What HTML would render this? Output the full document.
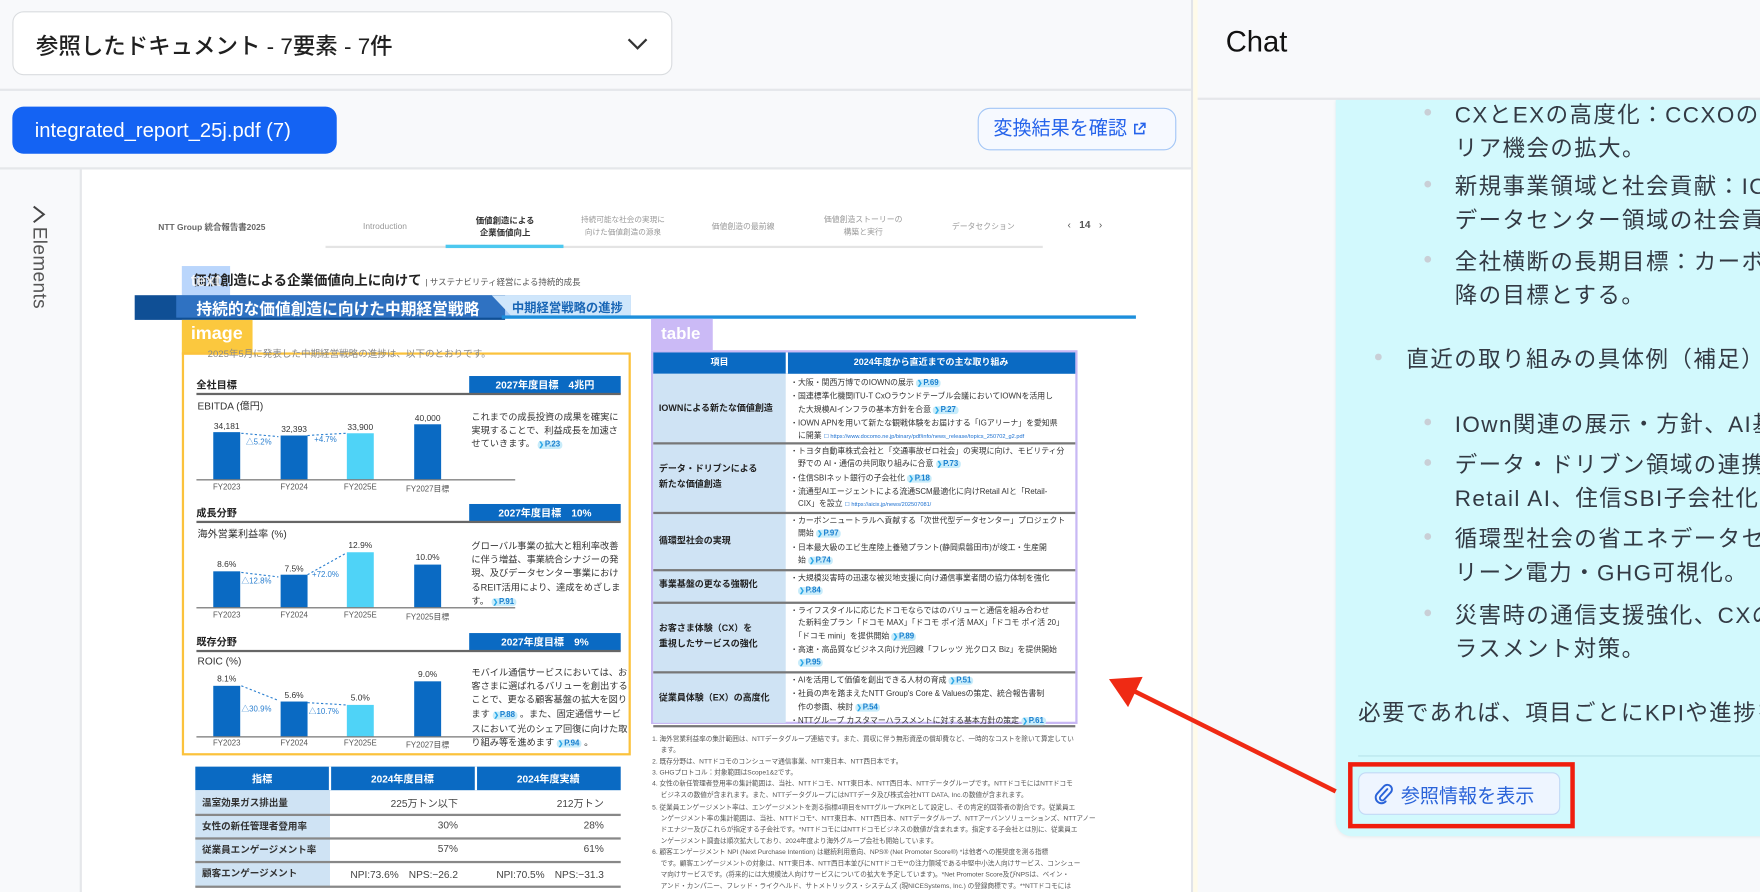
<!DOCTYPE html>
<html><head><meta charset="utf-8">
<style>
*{margin:0;padding:0;box-sizing:border-box}
html,body{width:1760px;height:892px;overflow:hidden;background:#f8f9fb}
body{font-family:"Liberation Sans","Noto Sans CJK JP",sans-serif;color:#222}
#w{position:absolute;left:0;top:0;width:1568px;height:795px;transform:scale(1.12245);transform-origin:0 0;overflow:hidden}
.a{position:absolute;white-space:nowrap}
.pg{color:#1a7fcf;background:#c8ecfa;border-radius:3px;font-weight:bold;padding:0 2px 0 1px}
.pg:before{content:"❯";font-size:0.8em;color:#2aa8e8;margin-right:1px}
.bar{position:absolute;background:#0a6ac3;width:24px}
.cy{background:#4fd3f7}
.fy{position:absolute;font-size:7px;color:#555;width:60px;text-align:center}
.val{position:absolute;font-size:7.5px;color:#333;width:60px;text-align:center}
.sec{position:absolute;font-size:9px;font-weight:bold;color:#222}
.goal{position:absolute;background:#0a6ac3;color:#fff;font-size:9px;font-weight:bold;text-align:center;height:16px;line-height:16px}
.hl{position:absolute;height:1.5px;background:#666}
.ptxt{position:absolute;font-size:8.2px;line-height:12.2px;color:#333;white-space:nowrap}
.tc{position:absolute;font-size:7px;line-height:11.3px;color:#333;white-space:nowrap}
.tl{position:absolute;font-size:8px;font-weight:bold;color:#222;line-height:14px}
.fn{position:absolute;font-size:5.9px;line-height:10.1px;color:#555;white-space:nowrap}
.cl{position:absolute;font-size:20px;letter-spacing:1.3px;color:#333a44;white-space:nowrap}
.dot{position:absolute;width:6px;height:6px;border-radius:50%;background:#c9cfd6}
</style></head><body><div id="w">

<div class="a" style="left:0;top:0;width:1062px;height:795px;background:#f8f9fb"></div>
<div class="a" style="left:1061px;top:0;width:2px;height:795px;background:#e2e4e8"></div>
<div class="a" style="left:1063px;top:0;width:4px;height:795px;background:#fffbe9"></div>

<div class="a" style="left:11px;top:10px;width:588px;height:57px;border:1.5px solid #d9dcdf;border-radius:10px;background:#fff"></div>
<div class="a" style="left:32px;top:25px;font-size:20px;font-weight:500;color:#1f1f1f">参照したドキュメント - 7要素 - 7件</div>
<svg class="a" style="left:558px;top:32px" width="20" height="14"><polyline points="2,3 10,11 18,3" fill="none" stroke="#333" stroke-width="2"/></svg>
<div class="a" style="left:0;top:79px;width:1061px;height:2px;background:#e5e7ea"></div>

<div class="a" style="left:11px;top:95px;width:289px;height:42px;border-radius:10px;background:#1463f3;color:#fff;font-size:18px;font-weight:500;line-height:42px;padding-left:20px">integrated_report_25j.pdf (7)</div>
<div class="a" style="left:871px;top:96px;width:177px;height:38px;border:1.5px solid #a3c6f6;border-radius:11px;background:#f6f9ff;color:#2563eb;font-size:17px;line-height:35px;padding-left:13px">変換結果を確認 <svg width="12" height="12" viewBox="0 0 12 12" style="vertical-align:-1px"><path d="M5 2H2v8h8V7M7 1h4v4M11 1 5.5 6.5" fill="none" stroke="#2563eb" stroke-width="1.4"/></svg></div>
<div class="a" style="left:0;top:149px;width:1061px;height:2px;background:#e5e7ea"></div>

<div class="a" style="left:71px;top:151px;width:1.5px;height:644px;background:#e5e7ea"></div>
<svg class="a" style="left:27px;top:182px" width="16" height="18"><polyline points="3,2 12,9 3,16" fill="none" stroke="#444" stroke-width="1.8"/></svg>
<div class="a" style="left:25px;top:202px;writing-mode:vertical-rl;font-size:17px;color:#555;letter-spacing:0.3px">Elements</div>

<div class="a" style="left:73px;top:151px;width:988px;height:644px;background:#fff"></div>

<div class="a" style="left:141px;top:197px;font-size:7.5px;font-weight:bold;color:#666">NTT Group 統合報告書2025</div>
<div class="a" style="left:313px;top:197px;width:60px;text-align:center;font-size:7.5px;color:#999">Introduction</div>
<div class="a" style="left:405px;top:191px;width:90px;text-align:center;font-size:7.5px;line-height:11px;font-weight:bold;color:#333">価値創造による<br>企業価値向上</div>
<div class="a" style="left:505px;top:191px;width:100px;text-align:center;font-size:6.8px;line-height:11px;color:#999">持続可能な社会の実現に<br>向けた価値創造の源泉</div>
<div class="a" style="left:612px;top:197px;width:100px;text-align:center;font-size:7px;color:#999">価値創造の最前線</div>
<div class="a" style="left:719px;top:191px;width:100px;text-align:center;font-size:7px;line-height:11px;color:#999">価値創造ストーリーの<br>構築と実行</div>
<div class="a" style="left:826px;top:197px;width:100px;text-align:center;font-size:7px;color:#999">データセクション</div>
<div class="a" style="left:951px;top:195px;font-size:9px;color:#555">‹ &nbsp; <b>14</b> &nbsp; ›</div>
<div class="a" style="left:290px;top:219px;width:639px;height:2px;background:#e4e4e4"></div>
<div class="a" style="left:397px;top:218px;width:105px;height:3px;background:#4cc8ef"></div>

<div class="a" style="left:162px;top:237px;width:43px;height:26px;background:rgba(130,180,250,.55)"></div>
<div class="a" style="left:172px;top:241px;font-size:12px;font-weight:bold;color:#222">価値創造による企業価値向上に向けて <span style="font-weight:normal;color:#555;font-size:7.5px">| サステナビリティ経営による持続的成長</span></div>
<div class="a" style="left:170px;top:242px;font-size:15px;font-weight:bold;color:rgba(255,255,255,.85)">text</div>

<div class="a" style="left:120px;top:263px;width:330px;height:22px;background:#0f4f95"></div>
<div class="a" style="left:157px;top:263px;width:405px;height:20px;background:rgba(80,150,240,.5)"></div>
<svg class="a" style="left:438px;top:263px" width="125" height="22"><polygon points="0,0 124,0 124,19 18,19" fill="#cfe6fb"/></svg>
<div class="a" style="left:447px;top:281px;width:565px;height:3px;background:#1d8fdc"></div>
<div class="a" style="left:175px;top:265px;font-size:14px;font-weight:bold;color:#fff">持続的な価値創造に向けた中期経営戦略</div>
<div class="a" style="left:456px;top:266px;font-size:11px;font-weight:bold;color:#1765b5">中期経営戦略の進捗</div>

<div class="a" style="left:162px;top:285px;width:63px;height:31px;background:#fbc83e"></div>
<div class="a" style="left:170px;top:289px;font-size:16px;font-weight:bold;color:#fff">image</div>
<div class="a" style="left:162px;top:314px;width:400px;height:359px;border:2px solid #fbc23c"></div>
<div class="a" style="left:185px;top:309px;font-size:8.5px;color:#888">2025年5月に発表した中期経営戦略の進捗は、以下のとおりです。</div>

<div class="sec" style="left:175px;top:336px">全社目標</div>
<div class="goal" style="left:418px;top:335px;width:135px">2027年度目標　4兆円</div>
<div class="hl" style="left:175px;top:350px;width:378px"></div>
<div class="a" style="left:176px;top:355px;font-size:9px;color:#333">EBITDA (億円)</div>
<div class="bar" style="left:190px;top:385px;height:42px"></div>
<div class="bar" style="left:250px;top:388px;height:39px"></div>
<div class="bar cy" style="left:309px;top:386px;height:41px"></div>
<div class="bar" style="left:369px;top:378px;height:49px"></div>
<div class="hl" style="left:175px;top:427px;width:284px;height:1px"></div>
<div class="val" style="left:172px;top:375px">34,181</div><div class="val" style="left:232px;top:378px">32,393</div><div class="val" style="left:291px;top:376px">33,900</div><div class="val" style="left:351px;top:368px">40,000</div>
<div class="fy" style="left:172px;top:431px">FY2023</div><div class="fy" style="left:232px;top:431px">FY2024</div><div class="fy" style="left:291px;top:431px">FY2025E</div><div class="fy" style="left:351px;top:431px">FY2027目標</div>
<svg class="a" style="left:214px;top:380px" width="100" height="20"><path d="M1 6 L34 9 M60 8 L94 6" stroke="#2a7fd0" stroke-dasharray="2 2" fill="none"/></svg>
<div class="a" style="left:219px;top:389px;font-size:7px;color:#2a7fd0">△5.2%</div>
<div class="a" style="left:280px;top:389px;font-size:7px;color:#2a7fd0">+4.7%</div>
<div class="ptxt" style="left:420px;top:366px">これまでの成長投資の成果を確実に<br>実現することで、利益成長を加速さ<br>せていきます。 <span class="pg" style="font-size:7px">P.23</span></div>

<div class="sec" style="left:175px;top:450px">成長分野</div>
<div class="goal" style="left:418px;top:449px;width:135px">2027年度目標　10%</div>
<div class="hl" style="left:175px;top:464px;width:378px"></div>
<div class="a" style="left:176px;top:469px;font-size:9px;color:#333">海外営業利益率 (%)</div>
<div class="bar" style="left:190px;top:509px;height:32px"></div>
<div class="bar" style="left:250px;top:512px;height:29px"></div>
<div class="bar cy" style="left:309px;top:492px;height:49px"></div>
<div class="bar" style="left:369px;top:503px;height:38px"></div>
<div class="hl" style="left:175px;top:541px;width:284px;height:1px"></div>
<div class="val" style="left:172px;top:498px">8.6%</div><div class="val" style="left:232px;top:502px">7.5%</div><div class="val" style="left:291px;top:481px">12.9%</div><div class="val" style="left:351px;top:492px">10.0%</div>
<div class="fy" style="left:172px;top:545px">FY2023</div><div class="fy" style="left:232px;top:545px">FY2024</div><div class="fy" style="left:291px;top:545px">FY2025E</div><div class="fy" style="left:351px;top:545px">FY2025目標</div>
<svg class="a" style="left:214px;top:490px" width="100" height="30"><path d="M1 20 L34 24 M60 22 L94 3" stroke="#2a7fd0" stroke-dasharray="2 2" fill="none"/></svg>
<div class="a" style="left:215px;top:513px;font-size:7px;color:#2a7fd0">△12.8%</div>
<div class="a" style="left:278px;top:509px;font-size:7px;color:#2a7fd0">+72.0%</div>
<div class="ptxt" style="left:420px;top:481px">グローバル事業の拡大と粗利率改善<br>に伴う増益、事業統合シナジーの発<br>現、及びデータセンター事業におけ<br>るREIT活用により、達成をめざしま<br>す。 <span class="pg" style="font-size:7px">P.91</span></div>

<div class="sec" style="left:175px;top:565px">既存分野</div>
<div class="goal" style="left:418px;top:564px;width:135px">2027年度目標　9%</div>
<div class="hl" style="left:175px;top:579px;width:378px"></div>
<div class="a" style="left:176px;top:584px;font-size:9px;color:#333">ROIC (%)</div>
<div class="bar" style="left:190px;top:611px;height:45px"></div>
<div class="bar" style="left:250px;top:625px;height:31px"></div>
<div class="bar cy" style="left:309px;top:628px;height:28px"></div>
<div class="bar" style="left:369px;top:607px;height:49px"></div>
<div class="hl" style="left:175px;top:656px;width:284px;height:1px"></div>
<div class="val" style="left:172px;top:600px">8.1%</div><div class="val" style="left:232px;top:615px">5.6%</div><div class="val" style="left:291px;top:617px">5.0%</div><div class="val" style="left:351px;top:596px">9.0%</div>
<div class="fy" style="left:172px;top:659px">FY2023</div><div class="fy" style="left:232px;top:659px">FY2024</div><div class="fy" style="left:291px;top:659px">FY2025E</div><div class="fy" style="left:351px;top:659px">FY2027目標</div>
<svg class="a" style="left:214px;top:610px" width="100" height="30"><path d="M1 1 L34 14 M60 16 L94 18" stroke="#2a7fd0" stroke-dasharray="2 2" fill="none"/></svg>
<div class="a" style="left:215px;top:627px;font-size:7px;color:#2a7fd0">△30.9%</div>
<div class="a" style="left:275px;top:629px;font-size:7px;color:#2a7fd0">△10.7%</div>
<div class="ptxt" style="left:420px;top:594px">モバイル通信サービスにおいては、お<br>客さまに選ばれるバリューを創出する<br>ことで、更なる顧客基盤の拡大を図り<br>ます <span class="pg" style="font-size:7px">P.88</span> 。また、固定通信サービ<br>スにおいて光のシェア回復に向けた取<br>り組み等を進めます <span class="pg" style="font-size:7px">P.94</span> 。</div>

<div class="a" style="left:174px;top:683px;width:379px;height:21px;background:#0a6ac3"></div>
<div class="a" style="left:293px;top:683px;width:1.5px;height:21px;background:#fff"></div>
<div class="a" style="left:423px;top:683px;width:1.5px;height:21px;background:#fff"></div>
<div class="a" style="left:174px;top:687px;width:119px;text-align:center;color:#fff;font-size:9px;font-weight:bold">指標</div>
<div class="a" style="left:294px;top:687px;width:129px;text-align:center;color:#fff;font-size:9px;font-weight:bold">2024年度目標</div>
<div class="a" style="left:424px;top:687px;width:129px;text-align:center;color:#fff;font-size:9px;font-weight:bold">2024年度実績</div>
<div class="a" style="left:174px;top:704px;width:120px;height:86px;background:#cfe3f4"></div>
<div class="hl" style="left:174px;top:725px;width:379px;height:1.5px;background:#888"></div>
<div class="hl" style="left:174px;top:746px;width:379px;height:1.5px;background:#888"></div>
<div class="hl" style="left:174px;top:767px;width:379px;height:1.5px;background:#888"></div>
<div class="hl" style="left:174px;top:789px;width:379px;height:1.5px;background:#888"></div>
<div class="a" style="left:180px;top:709px;font-size:8.5px;font-weight:bold;color:#333">温室効果ガス排出量</div>
<div class="a" style="left:180px;top:730px;font-size:8.5px;font-weight:bold;color:#333">女性の新任管理者登用率</div>
<div class="a" style="left:180px;top:751px;font-size:8.5px;font-weight:bold;color:#333">従業員エンゲージメント率</div>
<div class="a" style="left:180px;top:772px;font-size:8.5px;font-weight:bold;color:#333">顧客エンゲージメント</div>
<div class="a" style="left:294px;top:709px;width:114px;text-align:right;font-size:9px;color:#444">225万トン以下</div>
<div class="a" style="left:424px;top:709px;width:114px;text-align:right;font-size:9px;color:#444">212万トン</div>
<div class="a" style="left:294px;top:730px;width:114px;text-align:right;font-size:9px;color:#444">30%</div>
<div class="a" style="left:424px;top:730px;width:114px;text-align:right;font-size:9px;color:#444">28%</div>
<div class="a" style="left:294px;top:751px;width:114px;text-align:right;font-size:9px;color:#444">57%</div>
<div class="a" style="left:424px;top:751px;width:114px;text-align:right;font-size:9px;color:#444">61%</div>
<div class="a" style="left:294px;top:772px;width:114px;text-align:right;font-size:9px;color:#444">NPI:73.6%　NPS:−26.2</div>
<div class="a" style="left:424px;top:772px;width:114px;text-align:right;font-size:9px;color:#444">NPI:70.5%　NPS:−31.3</div>

<div class="a" style="left:580px;top:284px;width:55px;height:28px;background:#cbbaf6"></div>
<div class="a" style="left:589px;top:289px;font-size:15px;font-weight:bold;color:#fff">table</div>
<div class="a" style="left:580px;top:312px;width:380px;height:333px;border:2px solid #c8b8f4"></div>
<div class="a" style="left:582px;top:314px;width:376px;height:19px;background:#0a6ac3"></div>
<div class="a" style="left:700px;top:314px;width:1.5px;height:19px;background:#fff"></div>
<div class="a" style="left:582px;top:317px;width:118px;text-align:center;color:#fff;font-size:8px;font-weight:bold">項目</div>
<div class="a" style="left:701px;top:317px;width:257px;text-align:center;color:#fff;font-size:8px;font-weight:bold">2024年度から直近までの主な取り組み</div>
<div class="a" style="left:582px;top:333px;width:118px;height:311px;background:#cfe3f4"></div>
<div class="hl" style="left:582px;top:394px;width:376px;height:1.5px;background:#777"></div>
<div class="hl" style="left:582px;top:456px;width:376px;height:1.5px;background:#777"></div>
<div class="hl" style="left:582px;top:507px;width:376px;height:1.5px;background:#777"></div>
<div class="hl" style="left:582px;top:536px;width:376px;height:1.5px;background:#777"></div>
<div class="hl" style="left:582px;top:598px;width:376px;height:1.5px;background:#777"></div>
<div class="hl" style="left:582px;top:646px;width:376px;height:1.5px;background:#777"></div>
<div class="tl" style="left:587px;top:357px">IOWNによる新たな価値創造</div>
<div class="tl" style="left:587px;top:411px">データ・ドリブンによる<br>新たな価値創造</div>
<div class="tl" style="left:587px;top:475px">循環型社会の実現</div>
<div class="tl" style="left:587px;top:514px">事業基盤の更なる強靭化</div>
<div class="tl" style="left:587px;top:553px">お客さま体験（CX）を<br>重視したサービスの強化</div>
<div class="tl" style="left:587px;top:615px">従業員体験（EX）の高度化</div>
<div class="tc" style="left:704px;top:336px">・大阪・関西万博でのIOWNの展示 <span class="pg">P.69</span><br>・国連標準化機関ITU-T CxOラウンドテーブル会議においてIOWNを活用し<br>　た大規模AIインフラの基本方針を合意 <span class="pg">P.27</span><br>・IOWN APNを用いて新たな観戦体験をお届けする「IGアリーナ」を愛知県<br>　に開業 <span style="color:#1a6fd0;font-size:5px">☐ https://www.docomo.ne.jp/binary/pdf/info/news_release/topics_250702_g2.pdf</span></div>
<div class="tc" style="left:704px;top:397px">・トヨタ自動車株式会社と「交通事故ゼロ社会」の実現に向け、モビリティ分<br>　野での AI・通信の共同取り組みに合意 <span class="pg">P.73</span><br>・住信SBIネット銀行の子会社化 <span class="pg">P.18</span><br>・流通型AIエージェントによる流通SCM最適化に向けRetail AIと「Retail-<br>　CIX」を設立 <span style="color:#1a6fd0;font-size:5px">☐ https://aicix.jp/news/202507081/</span></div>
<div class="tc" style="left:704px;top:459px">・カーボンニュートラルへ貢献する「次世代型データセンター」プロジェクト<br>　開始 <span class="pg">P.97</span><br>・日本最大級のエビ生産陸上養殖プラント(静岡県磐田市)が竣工・生産開<br>　始 <span class="pg">P.74</span></div>
<div class="tc" style="left:704px;top:510px">・大規模災害時の迅速な被災地支援に向け通信事業者間の協力体制を強化<br>　<span class="pg">P.84</span></div>
<div class="tc" style="left:704px;top:539px">・ライフスタイルに応じたドコモならではのバリューと通信を組み合わせ<br>　た新料金プラン「ドコモ MAX」「ドコモ ポイ活 MAX」「ドコモ ポイ活 20」<br>　「ドコモ mini」を提供開始 <span class="pg">P.89</span><br>・高速・高品質なビジネス向け光回線「フレッツ 光クロス Biz」を提供開始<br>　<span class="pg">P.95</span></div>
<div class="tc" style="left:704px;top:601px">・AIを活用して価値を創出できる人材の育成 <span class="pg">P.51</span><br>・社員の声を踏まえたNTT Group's Core &amp; Valuesの策定、統合報告書制<br>　作の参画、検討 <span class="pg">P.54</span><br>・NTTグループ カスタマーハラスメントに対する基本方針の策定 <span class="pg">P.61</span></div>

<div class="fn" style="left:581px;top:654px">1. 海外営業利益率の集計範囲は、NTTデータグループ連結です。また、買収に伴う無形資産の償却費など、一時的なコストを除いて算定してい<br>　 ます。<br>2. 既存分野は、NTTドコモのコンシューマ通信事業、NTT東日本、NTT西日本です。<br>3. GHGプロトコル：対象範囲はScope1&amp;2です。<br>4. 女性の新任管理者登用率の集計範囲は、当社、NTTドコモ、NTT東日本、NTT西日本、NTTデータグループです。NTTドコモにはNTTドコモ<br>　 ビジネスの数値が含まれます。また、NTTデータグループにはNTTデータ及び株式会社NTT DATA, Inc.の数値が含まれます。<br>5. 従業員エンゲージメント率は、エンゲージメントを測る指標4項目をNTTグループKPIとして設定し、その肯定的回答者の割合です。従業員エ<br>　 ンゲージメント率の集計範囲は、当社、NTTドコモ*、NTT東日本、NTT西日本、NTTデータグループ、NTTアーバンソリューションズ、NTTアノー<br>　 ドエナジー及びこれらが指定する子会社です。*NTTドコモにはNTTドコモビジネスの数値が含まれます。指定する子会社とは別に、従業員エ<br>　 ンゲージメント調査は順次拡大しており、2024年度より海外グループ会社も開始しています。<br>6. 顧客エンゲージメント NPI (Next Purchase Intention) は継続利用意向、NPS® (Net Promoter Score®) *は他者への推奨度を測る指標<br>　 です。顧客エンゲージメントの対象は、NTT東日本、NTT西日本並びにNTTドコモ**の注力領域である中堅中小法人向けサービス、コンシュー<br>　 マ向けサービスです。(将来的には大規模法人向けサービスについての拡大を予定しています)。*Net Promoter Score及びNPSは、ベイン・<br>　 アンド・カンパニー、フレッド・ライクヘルド、サトメトリックス・システムズ (現NICESystems, Inc.) の登録商標です。**NTTドコモには<br>　 NTTドコモビジネスの数値が含まれます。</div>

<div class="a" style="left:1067px;top:0;width:501px;height:795px;background:#f8f9fb"></div>
<div class="a" style="left:1092px;top:22px;font-size:26px;color:#111">Chat</div>
<div class="a" style="left:1067px;top:87px;width:501px;height:1.5px;background:#e5e7ea"></div>
<div class="a" style="left:1190px;top:89px;width:400px;height:656px;background:#d2f9fd;border-radius:0 0 0 14px;box-shadow:0 1px 3px rgba(0,0,0,.06)"></div>

<div class="dot" style="left:1269px;top:97px"></div>
<div class="cl" style="left:1296px;top:86px">CXとEXの高度化：CCXOの新設と従業員エンゲージメント</div>
<div class="cl" style="left:1296px;top:116px">リア機会の拡大。</div>
<div class="dot" style="left:1269px;top:161px"></div>
<div class="cl" style="left:1296px;top:150px">新規事業領域と社会貢献：IOWNの展開と</div>
<div class="cl" style="left:1296px;top:180px">データセンター領域の社会貢献</div>
<div class="dot" style="left:1269px;top:228px"></div>
<div class="cl" style="left:1296px;top:217px">全社横断の長期目標：カーボンニュートラル</div>
<div class="cl" style="left:1296px;top:247px">降の目標とする。</div>
<div class="dot" style="left:1225px;top:315px"></div>
<div class="cl" style="left:1253px;top:304px">直近の取り組みの具体例（補足）</div>
<div class="dot" style="left:1269px;top:373px"></div>
<div class="cl" style="left:1296px;top:362px">IOwn関連の展示・方針、AI基盤の整備</div>
<div class="dot" style="left:1269px;top:409px"></div>
<div class="cl" style="left:1296px;top:398px">データ・ドリブン領域の連携強化</div>
<div class="cl" style="left:1296px;top:428px">Retail AI、住信SBI子会社化）</div>
<div class="dot" style="left:1269px;top:475px"></div>
<div class="cl" style="left:1296px;top:464px">循環型社会の省エネデータセンター</div>
<div class="cl" style="left:1296px;top:494px">リーン電力・GHG可視化。</div>
<div class="dot" style="left:1269px;top:543px"></div>
<div class="cl" style="left:1296px;top:532px">災害時の通信支援強化、CXの向上</div>
<div class="cl" style="left:1296px;top:562px">ラスメント対策。</div>
<div class="cl" style="left:1210px;top:619px">必要であれば、項目ごとにKPIや進捗を整理します。</div>
<div class="a" style="left:1210px;top:673px;width:358px;height:1px;background:#b8e4ea"></div>
<div class="a" style="left:1210px;top:688px;width:180px;height:38px;border:1.5px solid #c3d9f6;border-radius:7px;background:#eef5ff"></div>
<svg class="a" style="left:1224px;top:697px" width="18" height="20" viewBox="0 0 18 20"><path d="M12 6 L6 12.5 a2 2 0 0 0 3 3 L15 9 a4 4 0 0 0 -6 -5.5 L3 10 a5 5 0 0 0 7.5 7" fill="none" stroke="#2a63d9" stroke-width="1.7" stroke-linecap="round"/></svg>
<div class="a" style="left:1248px;top:695px;font-size:17px;color:#2a63d9">参照情報を表示</div>
<div class="a" style="left:1201px;top:679px;width:202px;height:59px;border:4px solid #f01e0e"></div>

<svg class="a" style="left:0;top:0" width="1568" height="795"><line x1="1190" y1="705" x2="1005" y2="613" stroke="#ef2a14" stroke-width="4"/><polygon points="988,605 1018,603 1005,630" fill="#ef2a14"/></svg>

</div></body></html>
